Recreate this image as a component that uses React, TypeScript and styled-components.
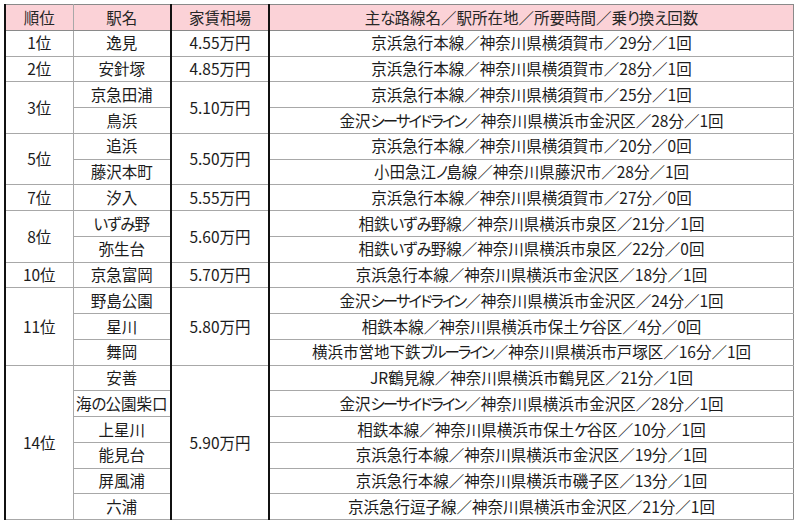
import React from "react";
import styled, { createGlobalStyle } from "styled-components";

interface Group {
  rank: string;
  rent: string;
  stations: [string, string][];
}

const groups: Group[] = [
  { rank: "1位", rent: "4.55万円", stations: [["逸見", "京浜急行本線／神奈川県横須賀市／29分／1回"]] },
  { rank: "2位", rent: "4.85万円", stations: [["安針塚", "京浜急行本線／神奈川県横須賀市／28分／1回"]] },
  {
    rank: "3位",
    rent: "5.10万円",
    stations: [
      ["京急田浦", "京浜急行本線／神奈川県横須賀市／25分／1回"],
      ["鳥浜", "金沢シーサイドライン／神奈川県横浜市金沢区／28分／1回"],
    ],
  },
  {
    rank: "5位",
    rent: "5.50万円",
    stations: [
      ["追浜", "京浜急行本線／神奈川県横須賀市／20分／0回"],
      ["藤沢本町", "小田急江ノ島線／神奈川県藤沢市／28分／1回"],
    ],
  },
  { rank: "7位", rent: "5.55万円", stations: [["汐入", "京浜急行本線／神奈川県横須賀市／27分／0回"]] },
  {
    rank: "8位",
    rent: "5.60万円",
    stations: [
      ["いずみ野", "相鉄いずみ野線／神奈川県横浜市泉区／21分／1回"],
      ["弥生台", "相鉄いずみ野線／神奈川県横浜市泉区／22分／0回"],
    ],
  },
  { rank: "10位", rent: "5.70万円", stations: [["京急富岡", "京浜急行本線／神奈川県横浜市金沢区／18分／1回"]] },
  {
    rank: "11位",
    rent: "5.80万円",
    stations: [
      ["野島公園", "金沢シーサイドライン／神奈川県横浜市金沢区／24分／1回"],
      ["星川", "相鉄本線／神奈川県横浜市保土ケ谷区／4分／0回"],
      ["舞岡", "横浜市営地下鉄ブルーライン／神奈川県横浜市戸塚区／16分／1回"],
    ],
  },
  {
    rank: "14位",
    rent: "5.90万円",
    stations: [
      ["安善", "JR鶴見線／神奈川県横浜市鶴見区／21分／1回"],
      ["海の公園柴口", "金沢シーサイドライン／神奈川県横浜市金沢区／28分／1回"],
      ["上星川", "相鉄本線／神奈川県横浜市保土ケ谷区／10分／1回"],
      ["能見台", "京浜急行本線／神奈川県横浜市金沢区／19分／1回"],
      ["屏風浦", "京浜急行本線／神奈川県横浜市磯子区／13分／1回"],
      ["六浦", "京浜急行逗子線／神奈川県横浜市金沢区／21分／1回"],
    ],
  },
];

// kana in the source font is narrower than kanji, so tighten those runs
function Text({ children }: { children: string }) {
  const parts = children.split(/([\u3040-\u309f]+|[\u30a0-\u30ff]+)/);
  return (
    <>
      {parts.map((p, i) => {
        if (/^[\u30a0-\u30ff]+$/.test(p)) return <Kana key={i} $katakana>{p}</Kana>;
        if (/^[\u3040-\u309f]+$/.test(p)) return <Kana key={i}>{p}</Kana>;
        return p;
      })}
    </>
  );
}

function App() {
  return (
    <>
      <GlobalStyle />
      <Page>
        <Table>
          <colgroup>
            <col style={{ width: 68 }} />
            <col style={{ width: 98 }} />
            <col style={{ width: 98 }} />
            <col />
          </colgroup>
          <thead>
            <Row>
              <HeadCell>順位</HeadCell>
              <HeadCell>駅名</HeadCell>
              <HeadCell>家賃相場</HeadCell>
              <HeadCell>
                <Text>主な路線名／駅所在地／所要時間／乗り換え回数</Text>
              </HeadCell>
            </Row>
          </thead>
          <tbody>
            {groups.map((g) =>
              g.stations.map(([name, route], i) => (
                <Row key={g.rank + name}>
                  {i === 0 && <RankCell rowSpan={g.stations.length}>{g.rank}</RankCell>}
                  <NameCell>
                    <Text>{name}</Text>
                  </NameCell>
                  {i === 0 && <RentCell rowSpan={g.stations.length}>{g.rent}</RentCell>}
                  <RouteCell>
                    <Text>{route}</Text>
                  </RouteCell>
                </Row>
              ))
            )}
          </tbody>
        </Table>
      </Page>
    </>
  );
}

export default App;

const GlobalStyle = createGlobalStyle`
  body {
    margin: 0;
    background: #fff;
    font-family: "Noto Sans CJK JP", "Noto Sans", sans-serif;
    color: #1c1c1c;
  }
`;

const Page = styled.div`
  width: 800px;
  height: 525px;
  padding: 4px 6px 0 4px;
  box-sizing: border-box;
  overflow: hidden;
`;

const Table = styled.table`
  width: 790px;
  table-layout: fixed;
  border-collapse: collapse;
  font-size: 15.5px;
  line-height: 1;
  color: #1c1c1c;
`;

const Row = styled.tr`
  height: 25.75px;
`;

const Kana = styled.span<{ $katakana?: boolean }>`
  font-feature-settings: "palt";
  letter-spacing: ${(p) => (p.$katakana ? "-2px" : "-1px")};
`;

const Cell = styled.td`
  padding: 0;
  text-align: center;
  vertical-align: middle;
  white-space: nowrap;
  color: #1c1c1c;
  border-top: 1px solid #a8a8a8;
  border-bottom: 1px solid #a8a8a8;
`;

const HeadCell = styled(Cell).attrs({ as: "th" })`
  font-weight: 400;
  background: #fbd2d7;
  color: #262626;
  border-top: 1px solid #8a8a8a;
  border-bottom: 1px solid #8a8a8a;
  &:nth-child(1) {
    border-left: 2px solid #111;
    border-right: 1px solid #a8a8a8;
  }
  &:nth-child(2) {
    border-right: 2px solid #111;
  }
  &:nth-child(3) {
    border-right: 2px solid #111;
  }
  &:nth-child(4) {
    border-right: 1px solid #8a8a8a;
  }
`;

const RankCell = styled(Cell)`
  border-left: 2px solid #111;
  border-right: 1px solid #a8a8a8;
`;

const NameCell = styled(Cell)`
  border-right: 2px solid #111;
`;

const RentCell = styled(Cell)`
  border-right: 2px solid #111;
`;

const RouteCell = styled(Cell)`
  border-right: 1px solid #8a8a8a;
`;
